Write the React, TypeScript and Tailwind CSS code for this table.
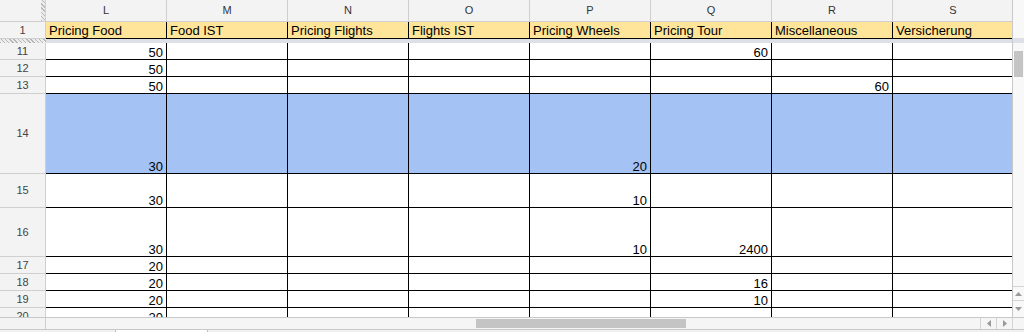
const columns = ["L", "M", "N", "O", "P", "Q", "R", "S"];

const headers = [
  "Pricing Food",
  "Food IST",
  "Pricing Flights",
  "Flights IST",
  "Pricing Wheels",
  "Pricing Tour",
  "Miscellaneous",
  "Versicherung",
];

type Row = {
  n: number;
  h: string;
  vals: Record<string, string>;
  blue?: boolean;
};

const rows: Row[] = [
  { n: 11, h: "h-[17px]", vals: { L: "50", Q: "60" } },
  { n: 12, h: "h-[17px]", vals: { L: "50" } },
  { n: 13, h: "h-[17px]", vals: { L: "50", R: "60" } },
  { n: 14, h: "h-[80px]", vals: { L: "30", P: "20" }, blue: true },
  { n: 15, h: "h-[34px]", vals: { L: "30", P: "10" } },
  { n: 16, h: "h-[49px]", vals: { L: "30", P: "10", Q: "2400" } },
  { n: 17, h: "h-[17px]", vals: { L: "20" } },
  { n: 18, h: "h-[17px]", vals: { L: "20", Q: "16" } },
  { n: 19, h: "h-[17px]", vals: { L: "20", Q: "10" } },
  { n: 20, h: "h-[17px]", vals: { L: "20" } },
];

const hatch =
  "bg-[repeating-linear-gradient(45deg,#b8b8b8_0px,#b8b8b8_1px,#ececec_1px,#ececec_3px)]";

function Arrow({ dir }: { dir: "up" | "down" | "left" | "right" }) {
  const pts = {
    up: "0,4 3.5,0 7,4",
    down: "0,0 3.5,4 7,0",
    left: "4,0 0,3.5 4,7",
    right: "0,0 4,3.5 0,7",
  }[dir];
  const vertical = dir === "up" || dir === "down";
  return (
    <svg
      width={vertical ? 7 : 4}
      height={vertical ? 4 : 7}
      viewBox={vertical ? "0 0 7 4" : "0 0 4 7"}
    >
      <polygon points={pts} fill="#9a9a9a" />
    </svg>
  );
}

function ColumnHeaders() {
  return (
    <div className="flex h-[22px] shrink-0">
      <div className="flex w-[46px] shrink-0 border-r border-b border-[#cfcfcf] bg-[#f3f3f3]">
        <div className="flex-1" />
        <div className={`w-[4px] ${hatch}`} />
      </div>
      {columns.map((c) => (
        <div
          key={c}
          className="flex w-[121px] shrink-0 items-center justify-center border-r border-b border-[#cfcfcf] bg-[#f3f3f3] text-[11px] text-[#333]"
        >
          {c}
        </div>
      ))}
    </div>
  );
}

function FrozenRow() {
  return (
    <div className="flex h-[17px] shrink-0">
      <div className="flex w-[46px] shrink-0 items-center justify-center border-r border-b border-[#cfcfcf] bg-[#f3f3f3] text-[11px] text-[#444]">
        1
      </div>
      {headers.map((h) => (
        <div
          key={h}
          className="flex w-[121px] shrink-0 items-end whitespace-nowrap border-r border-b border-black bg-[#ffe599] pb-[1px] pl-[3px] text-[13px] leading-[13px] text-black"
        >
          {h}
        </div>
      ))}
    </div>
  );
}

function DataRow({ row }: { row: Row }) {
  return (
    <div className={`flex shrink-0 ${row.h}`}>
      <div className="flex w-[46px] shrink-0 items-center justify-center border-r border-b border-[#cfcfcf] bg-[#f3f3f3] text-[11px] text-[#444]">
        {row.n}
      </div>
      {columns.map((c) => (
        <div
          key={c}
          className={`flex w-[121px] shrink-0 items-end justify-end border-r border-b border-black pr-[3px] text-[13px] leading-[13px] text-black ${
            row.blue ? "bg-[#a4c2f4]" : "bg-white"
          }`}
        >
          {row.vals[c] ?? ""}
        </div>
      ))}
    </div>
  );
}

export default function App() {
  return (
    <div className="flex h-[332px] w-[1024px] flex-col overflow-hidden bg-white font-['Liberation_Sans',Arial,sans-serif]">
      <div className="flex h-[317px] shrink-0">
        <div className="flex w-[1012px] shrink-0 flex-col overflow-hidden">
          <ColumnHeaders />
          <FrozenRow />
          <div className="flex h-[4px] shrink-0">
            <div className={`w-[46px] shrink-0 ${hatch}`} />
            <div className="flex-1 bg-[#dde1e7]" />
          </div>
          {rows.map((r) => (
            <DataRow key={r.n} row={r} />
          ))}
        </div>

        {/* vertical scrollbar */}
        <div className="flex w-[12px] shrink-0 flex-col border-l border-[#c8c8c8] bg-[#f8f8f8]">
          <div className="h-[38px] shrink-0" />
          <div className="h-[5px] shrink-0 bg-[#dde1e7]" />
          <div className="flex-1">
            <div className="ml-[1px] mt-[8px] h-[26px] w-[9px] bg-[#c4c4c4]" />
          </div>
          <div className="flex h-[14px] shrink-0 items-center justify-center border-t border-[#d4d4d4]">
            <Arrow dir="up" />
          </div>
          <div className="flex h-[17px] shrink-0 items-center justify-center border-t border-[#d4d4d4]">
            <Arrow dir="down" />
          </div>
        </div>
      </div>

      {/* horizontal scrollbar */}
      <div className="flex h-[13px] shrink-0 border-y border-[#c8c8c8] bg-[#f5f5f5]">
        <div className="w-[46px] shrink-0 border-r border-[#cfcfcf] bg-[#f3f3f3]" />
        <div className="flex flex-1 items-center">
          <div className="ml-[430px] h-[9px] w-[210px] bg-[#c4c4c4]" />
        </div>
        <div className="flex w-[16px] shrink-0 items-center justify-center border-l border-[#d4d4d4]">
          <Arrow dir="left" />
        </div>
        <div className="flex w-[16px] shrink-0 items-center justify-center border-l border-[#d4d4d4]">
          <Arrow dir="right" />
        </div>
        <div className="w-[12px] shrink-0 border-l border-[#d4d4d4]" />
      </div>

      {/* sheet tabs */}
      <div className="flex flex-1 bg-[#f1f1f1]">
        <div className="w-[116px] shrink-0 border-r border-[#bdbdbd]" />
        <div className="w-[92px] shrink-0 border-r border-[#bdbdbd] bg-white" />
        <div className="flex-1" />
      </div>
    </div>
  );
}
